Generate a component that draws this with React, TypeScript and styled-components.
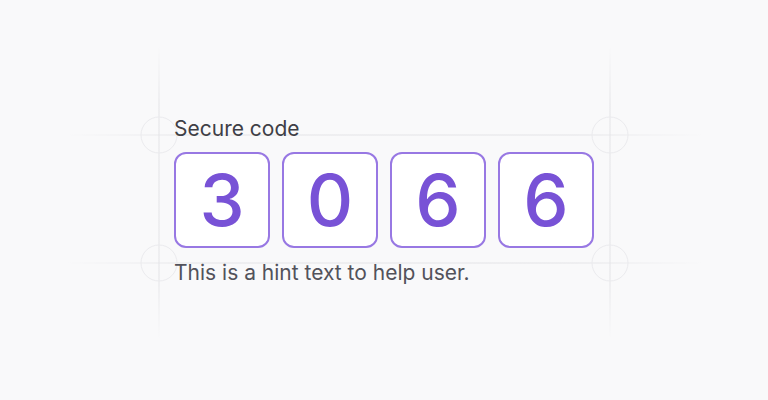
import React from 'react'
import styled, { createGlobalStyle } from 'styled-components'

const GlobalStyle = createGlobalStyle`
    html, body {
        margin: 0;
        padding: 0;
        background: #f9f9fa;
    }
    body {
        font-family: Inter, "Noto Sans", sans-serif;
    }
`

const Stage = styled.div`
    position: relative;
    width: 768px;
    height: 400px;
    display: flex;
    align-items: center;
    justify-content: center;
    overflow: hidden;
`

const Guides = styled.svg`
    position: absolute;
    inset: 0;
    pointer-events: none;
`

const Field = styled.div`
    position: relative;
    display: flex;
    flex-direction: column;
    margin-top: 2px;
`

const Label = styled.label`
    font-size: 21px;
    line-height: 28px;
    color: #3f3f46;
    margin-bottom: 9px;
`

const Row = styled.div`
    display: flex;
    gap: 12px;
`

const Cell = styled.div`
    width: 96px;
    height: 96px;
    box-sizing: border-box;
    border: 2px solid #9878e3;
    border-radius: 12px;
    background: #ffffff;
    display: flex;
    align-items: center;
    justify-content: center;
    font-size: 72px;
    font-weight: 500;
    line-height: 1;
    color: #7852d6;
`

const Hint = styled.p`
    margin: 11px 0 0;
    font-size: 21px;
    line-height: 28px;
    color: #52525b;
`

const code = ['3', '0', '6', '6']

function GuideLines() {
    const xs = [159, 610]
    const ys = [135, 263]
    return (
        <Guides width="768" height="400" viewBox="0 0 768 400">
            <defs>
                <linearGradient id="fadeV" x1="0" y1="0" x2="0" y2="1">
                    <stop offset="0" stopColor="#e4e4e7" stopOpacity="0" />
                    <stop offset="0.2" stopColor="#e4e4e7" />
                    <stop offset="0.8" stopColor="#e4e4e7" />
                    <stop offset="1" stopColor="#e4e4e7" stopOpacity="0" />
                </linearGradient>
                <linearGradient id="fadeH" x1="0" y1="0" x2="1" y2="0">
                    <stop offset="0" stopColor="#e4e4e7" stopOpacity="0" />
                    <stop offset="0.2" stopColor="#e4e4e7" />
                    <stop offset="0.8" stopColor="#e4e4e7" />
                    <stop offset="1" stopColor="#e4e4e7" stopOpacity="0" />
                </linearGradient>
            </defs>
            {xs.map(x => (
                <rect key={'v' + x} x={x - 0.5} y={45} width={1} height={295} fill="url(#fadeV)" />
            ))}
            {ys.map(y => (
                <rect key={'h' + y} x={65} y={y - 0.5} width={640} height={1} fill="url(#fadeH)" />
            ))}
            {xs.map(x => ys.map(y => (
                <circle key={x + '-' + y} cx={x} cy={y} r={18} fill="none" stroke="#ebebee" strokeWidth={1} />
            )))}
        </Guides>
    )
}

export default function App() {
    return (
        <>
            <GlobalStyle />
            <Stage>
                <GuideLines />
                <Field>
                    <Label>Secure code</Label>
                    <Row>
                        {code.map((d, i) => (
                            <Cell key={i}>{d}</Cell>
                        ))}
                    </Row>
                    <Hint>This is a hint text to help user.</Hint>
                </Field>
            </Stage>
        </>
    )
}
